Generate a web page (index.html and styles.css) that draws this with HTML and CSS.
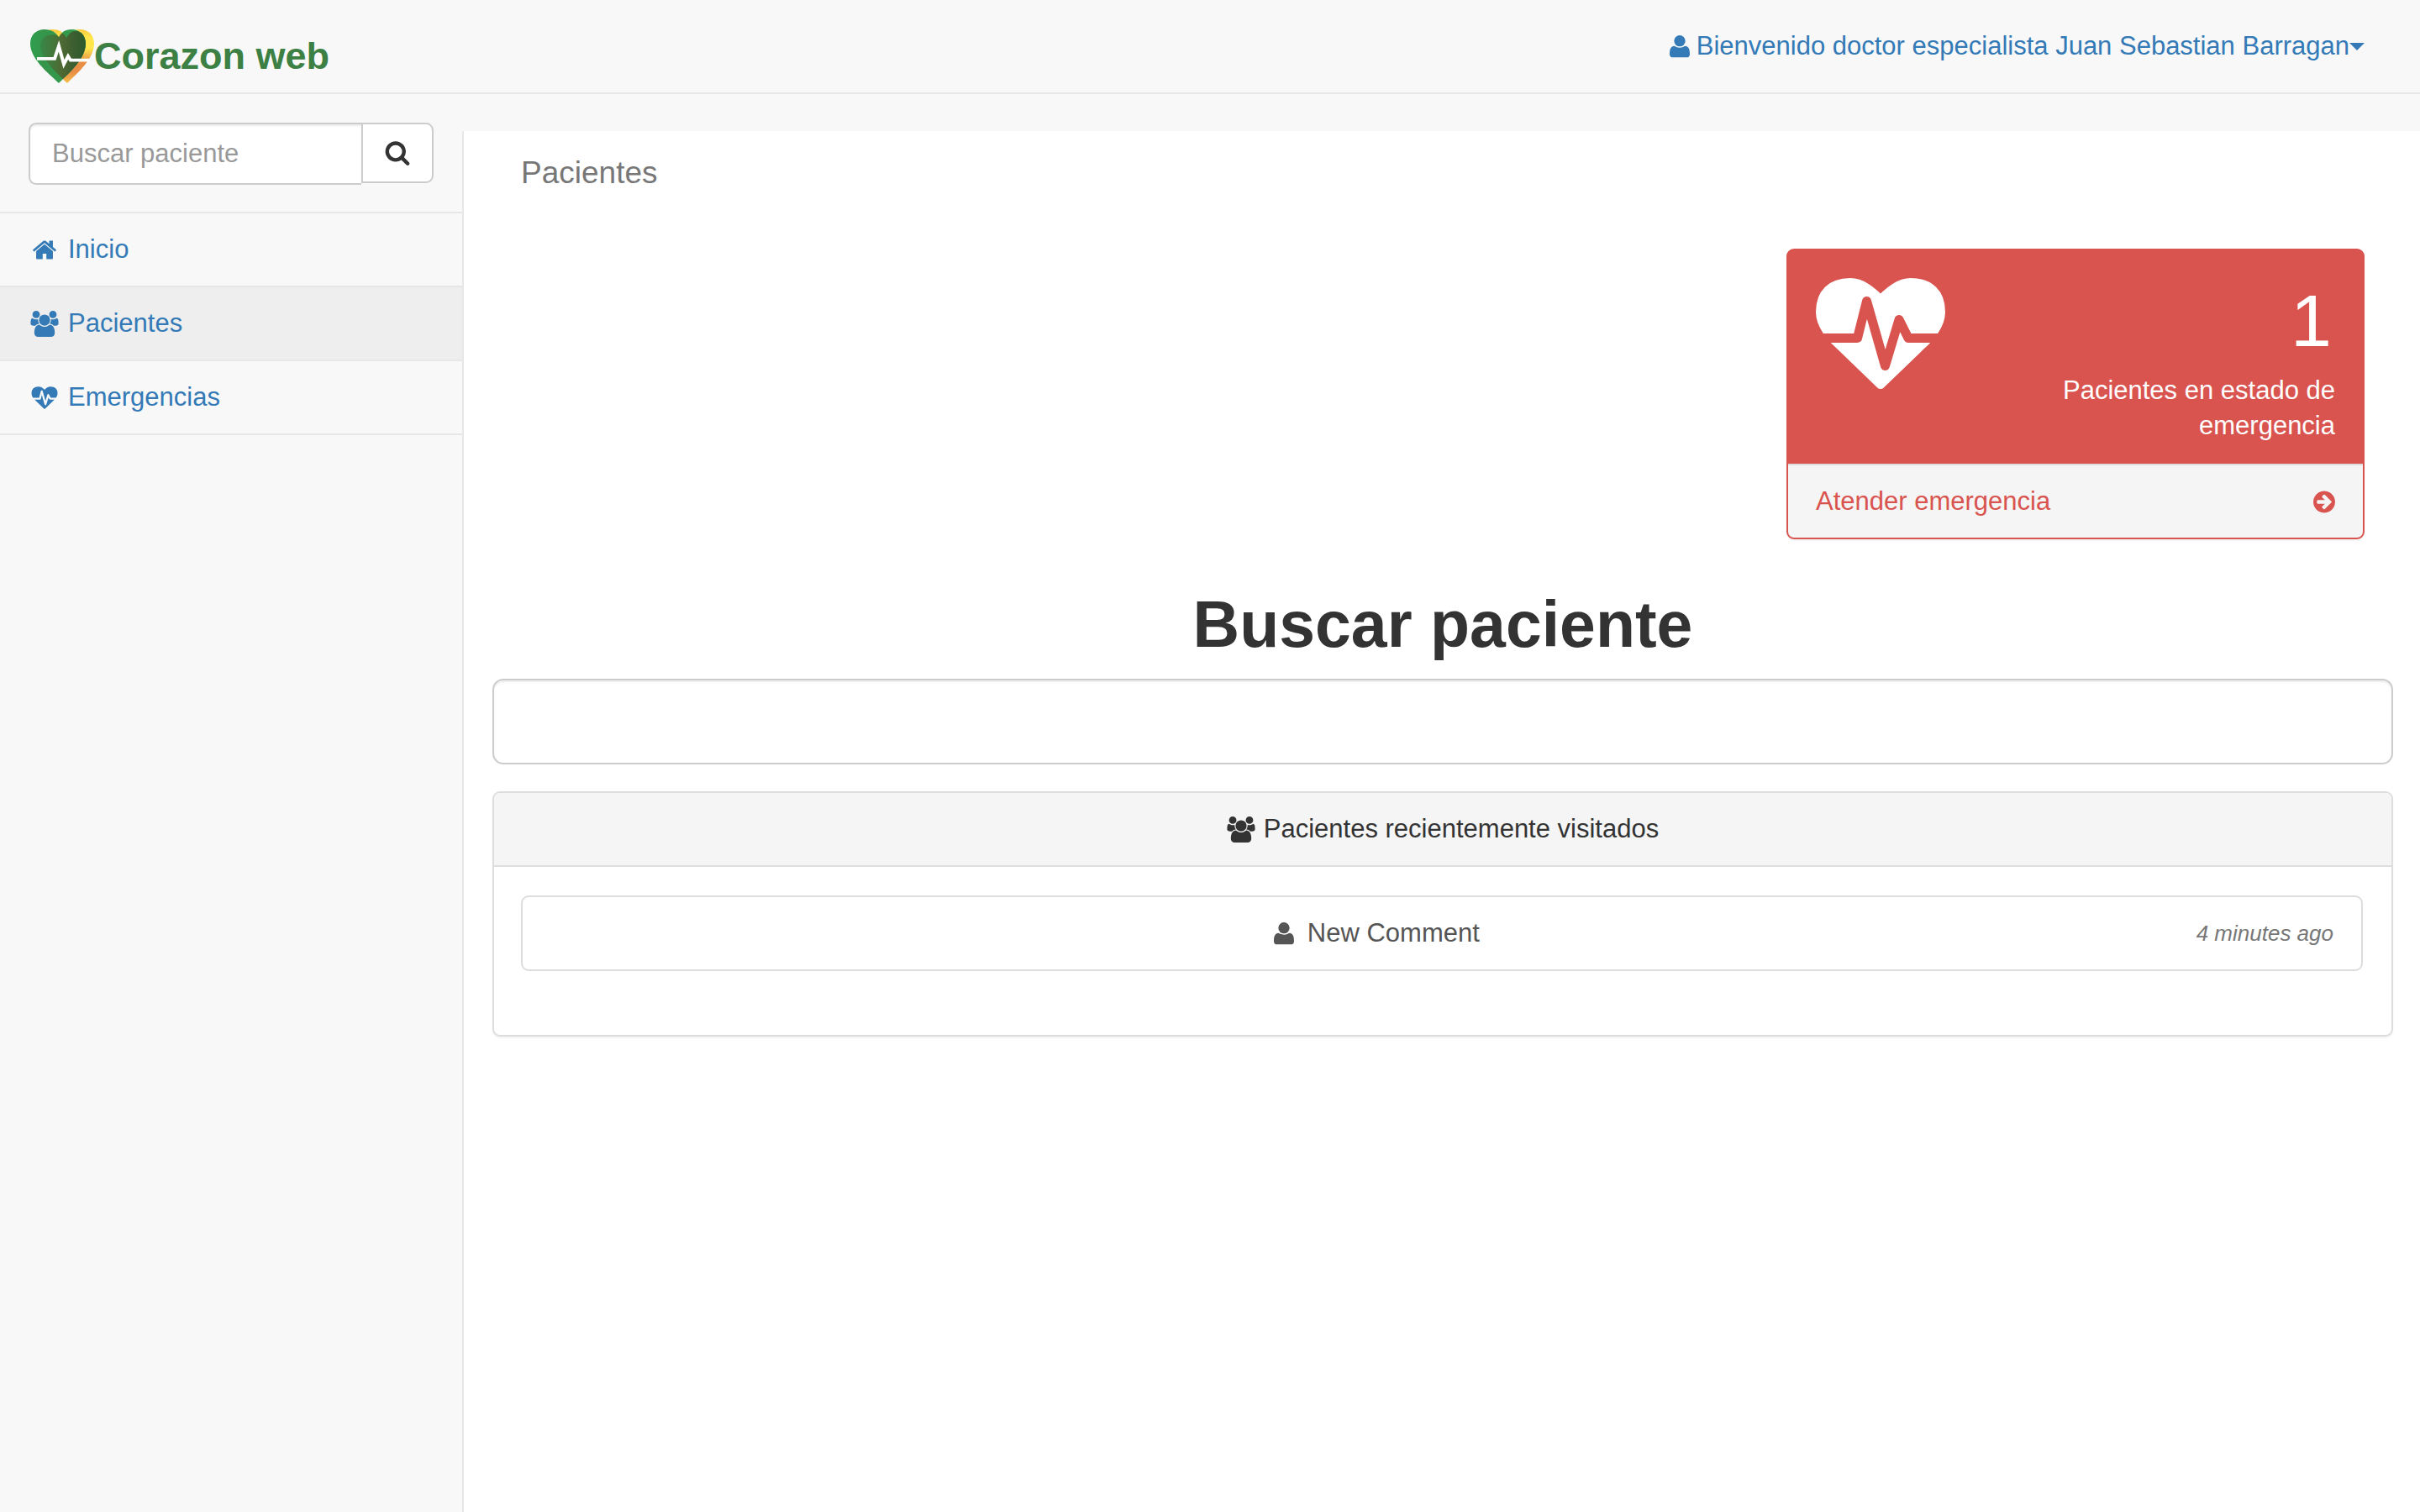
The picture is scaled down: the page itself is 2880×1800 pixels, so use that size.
FILE: index.html
```html
<!DOCTYPE html>
<html lang="es">
<head>
<meta charset="utf-8">
<title>Corazon web</title>
<link rel="stylesheet" href="styles.css">
</head>
<body>
<svg class="sprite" aria-hidden="true">
  <symbol id="i-user" viewBox="35 29 72 93"><circle cx="71" cy="55" r="20"/><path d="M35 103C35 88 37 75 50 73C54 73 60 79 71 79S88 73 92 73C105 75 107 88 107 103C107 110 102 114 96 114H46C40 114 35 110 35 103Z"/></symbol>
  <symbol id="i-home" viewBox="0 0 1792 1792"><path d="M1472 992v480q0 26-19 45t-45 19h-384v-384h-256v384h-384q-26 0-45-19t-19-45v-480q0-1 .5-3t.5-3l575-474 575 474q1 2 1 6zm223-69l-62 74q-8 9-21 11h-3q-13 0-21-7l-692-577-692 577q-12 8-24 7-13-2-21-11l-62-74q-8-10-7-23.5t11-21.5l719-599q32-26 76-26t76 26l244 204v-195q0-14 9-23t23-9h192q14 0 23 9t9 23v408l219 182q10 8 11 21.5t-7 23.5z"/></symbol>
  <symbol id="i-users" viewBox="-64 0 1920 1792"><path d="M529 896q-162 5-265 128h-134q-82 0-138-40.500t-56-118.500q0-353 124-353 6 0 43.500 21t97.500 42.500 119 21.500q67 0 133-23-5 37-5 66 0 139 81 256zm1071 637q0 120-73 189.500t-194 69.500h-874q-121 0-194-69.500t-73-189.500q0-53 3.500-103.500t14-109 26.500-108.500 43-97.500 62-81 85.500-53.500 111.500-20q10 0 43 21.500t73 48 107 48 135 21.500 135-21.500 107-48 73-48 43-21.500q61 0 111.500 20t85.500 53.500 62 81 43 97.500 26.500 108.500 14 109 3.500 103.500zm-1024-1277q0 106-75 181t-181 75-181-75-75-181 75-181 181-75 181 75 75 181zm704 384q0 159-112.500 271.500t-271.500 112.500-271.500-112.500-112.500-271.500 112.500-271.500 271.500-112.500 271.500 112.500 112.500 271.500zm576 225q0 78-56 118.500t-138 40.500h-134q-103-123-265-128 81-117 81-256 0-29-5-66 66 23 133 23 59 0 119-21.500t97.500-42.500 43.500-21q124 0 124 353zm-128-609q0 106-75 181t-181 75-181-75-75-181 75-181 181-75 181 75 75 181z"/></symbol>
  <symbol id="i-heartbeat" viewBox="0 0 1792 1792"><path d="M1280 1024h305q-5 6-10 10.500t-9 7.500l-3 4-623 600q-18 18-44 18t-44-18l-624-602q-5-2-21-20h369q22 0 39.500-13.500t22.500-34.500l70-281 190 667q6 20 23 33t39 13q21 0 38-13t23-33l146-485 56 112q18 35 57 35zm512-428q0 145-103 300h-369l-111-221q-8-17-25.500-27t-36.500-8q-45 5-56 46l-129 430-196-686q-6-20-23.500-33t-39.500-13-39 13.500-22 34.500l-116 464h-423q-103-155-103-300 0-220 127-344t351-124q62 0 126.500 21.500t120 58 95.500 68.500 76 68q36-36 76-68t95.500-68.500 120-58 126.500-21.500q224 0 351 124t127 344z"/></symbol>
  <symbol id="i-search" viewBox="0 0 1792 1792"><path d="M1216 832q0-185-131.500-316.500t-316.500-131.500-316.500 131.500-131.500 316.500 131.500 316.500 316.500 131.500 316.500-131.500 131.500-316.500zm512 832q0 52-38 90t-90 38q-54 0-90-38l-343-342q-179 124-399 124-143 0-273.500-55.500t-225-150-150-225-55.500-273.500 55.500-273.500 150-225 225-150 273.500-55.500 273.500 55.500 225 150 150 225 55.500 273.500q0 220-124 399l343 343q37 37 37 90z"/></symbol>
  <symbol id="i-arrow" viewBox="128 0 1536 1792"><path d="M1413 896q0-27-18-45l-91-91-362-362q-18-18-45-18t-45 18l-91 91q-18 18-18 45t18 45l189 189h-502q-26 0-45 19t-19 45v128q0 26 19 45t45 19h502l-189 189q-18 18-18 45t18 45l91 91q18 18 45 18t45-18l362-362 91-91q18-18 18-45zm251 0q0 209-103 385.500t-279.500 279.500-385.500 103-385.500-103-279.500-279.500-103-385.500 103-385.500 279.500-279.500 385.500-103 385.500 103 279.500 279.500 103 385.500z"/></symbol>
</svg>

<header class="topbar">
  <a class="brand" href="#">
    <svg class="brand-logo" viewBox="0 0 76 68" preserveAspectRatio="none" aria-hidden="true">
      <defs>
        <linearGradient id="g-yellow" x1="0" y1="0" x2="0" y2="1">
          <stop offset="0" stop-color="#fbc93f"/><stop offset=".15" stop-color="#ffe64c"/><stop offset=".35" stop-color="#ffe64c"/><stop offset=".6" stop-color="#e88f45"/><stop offset=".8" stop-color="#e88f45"/><stop offset="1" stop-color="#f7c04a"/>
        </linearGradient>
        <linearGradient id="g-green" x1="0" y1="0" x2="1" y2="0">
          <stop offset="0" stop-color="#2f9e4f"/><stop offset=".25" stop-color="#35954a"/><stop offset="1" stop-color="#2f9e4f"/>
        </linearGradient>
        <linearGradient id="g-dark" x1="0" y1="0" x2="1" y2="0">
          <stop offset="0" stop-color="#37884a"/><stop offset=".2" stop-color="#417a3c"/><stop offset=".4" stop-color="#4f6834"/><stop offset=".65" stop-color="#3a5d30"/><stop offset=".85" stop-color="#2b5a2e"/>
        </linearGradient>
        <clipPath id="c-green"><path d="M34 68C27 60 0 39 0 18C0 7 7 0 17 0C25 0 31 4 34 10C37 4 41 0 49 0C59 0 66 7 66 18C66 39 41 60 34 68Z"/></clipPath>
      </defs>
      <path fill="url(#g-yellow)" d="M44 68C37 60 10 39 10 18C10 7 17 0 27 0C35 0 40 4 43 10C46 4 51 0 59 0C69 0 76 7 76 18C76 39 51 60 44 68Z"/>
      <path fill="url(#g-green)" d="M34 68C27 60 0 39 0 18C0 7 7 0 17 0C25 0 31 4 34 10C37 4 41 0 49 0C59 0 66 7 66 18C66 39 41 60 34 68Z"/>
      <path clip-path="url(#c-green)" fill="url(#g-dark)" d="M44 68C37 60 12 39 12 20C12 10 22 4 33 8C37 4 40 4 43 11C46 4 52 0 58 3C66 8 76 7 76 18C76 39 51 60 44 68Z"/>
      <path fill="none" stroke="#fff" stroke-width="4" d="M8 37H29L34 21L40 44L45 34L48 39H70"/>
    </svg>
    <span>Corazon web</span>
  </a>
  <a class="account" href="#">
    <svg class="icon icon-user" aria-hidden="true"><use href="#i-user"/></svg>
    <span>Bienvenido doctor especialista Juan Sebastian Barragan</span><i class="caret"></i>
  </a>
</header>

<div class="layout">
  <aside class="sidebar">
    <form class="side-search" role="search">
      <input type="text" placeholder="Buscar paciente" aria-label="Buscar paciente">
      <button type="button" aria-label="Buscar"><svg class="icon" aria-hidden="true"><use href="#i-search"/></svg></button>
    </form>
    <nav class="menu">
      <a href="#"><svg class="icon" aria-hidden="true"><use href="#i-home"/></svg>Inicio</a>
      <a href="#" class="active"><svg class="icon" aria-hidden="true"><use href="#i-users"/></svg>Pacientes</a>
      <a href="#"><svg class="icon" aria-hidden="true"><use href="#i-heartbeat"/></svg>Emergencias</a>
    </nav>
  </aside>

  <main class="content">
    <h2 class="page-title">Pacientes</h2>
    <div class="alerts">
      <div class="alert-col">
        <section class="alert-card">
          <div class="alert-body">
            <svg class="alert-icon" aria-hidden="true"><use href="#i-heartbeat"/></svg>
            <div class="alert-text">
              <div class="alert-count">1</div>
              <div>Pacientes en estado de emergencia</div>
            </div>
          </div>
          <a class="alert-footer" href="#">
            <span>Atender emergencia</span>
            <svg class="icon icon-arrow" aria-hidden="true"><use href="#i-arrow"/></svg>
          </a>
        </section>
      </div>
    </div>

    <h1 class="search-title"><label for="patient">Buscar paciente</label></h1>
    <input class="search-input" id="patient" type="text">

    <section class="panel">
      <div class="panel-heading">
        <svg class="icon icon-users" aria-hidden="true"><use href="#i-users"/></svg>
        <span>Pacientes recientemente visitados</span>
      </div>
      <div class="panel-body">
        <a class="list-item" href="#">
          <span class="list-name"><svg class="icon" aria-hidden="true"><use href="#i-user"/></svg>New Comment</span>
          <em>4 minutes ago</em>
        </a>
      </div>
    </section>
  </main>
</div>
</body>
</html>
```
FILE: styles.css
```css
* {
  box-sizing: border-box;
}

body {
  margin: 0;
  min-height: 100vh;
  display: flex;
  flex-direction: column;
  background: #f8f8f8;
  color: #333;
  font-family: "Liberation Sans", Helvetica, Arial, sans-serif;
  font-size: 31px;
  line-height: 44px;
}

a {
  color: #337ab7;
  text-decoration: none;
}

.sprite {
  display: none;
}

.icon {
  flex: none;
  width: 40px;
  height: 31px;
  fill: currentColor;
}

.icon-user {
  width: 24px;
}

.icon-users {
  width: 34px;
}

.icon-arrow {
  width: 26px;
}

/* Top bar */

.topbar {
  display: flex;
  justify-content: space-between;
  height: 112px;
  padding: 0 66px 0 36px;
  border-bottom: 2px solid #e7e7e7;
}

.brand {
  display: flex;
  align-items: center;
  padding-top: 24px;
  color: #3c8043;
  font-size: 45px;
  font-weight: bold;
}

.brand-logo {
  width: 76px;
  height: 64px;
}

.account {
  display: flex;
  align-items: center;
  align-self: flex-start;
  padding-top: 33px;
}

.account .icon {
  margin-right: 8px;
}

.caret {
  border: 9px solid transparent;
  border-top-color: currentColor;
  border-bottom: 0;
}

/* Columns */

.layout {
  flex: 1;
  display: flex;
}

.sidebar {
  flex: none;
  width: 550px;
}

.side-search {
  display: flex;
  align-items: flex-start;
  padding: 34px 34px 32px;
}

.side-search input {
  flex: 1;
  min-width: 0;
  height: 74px;
  padding: 0 26px;
  border: 2px solid #ccc;
  border-right: 0;
  border-radius: 9px 0 0 9px;
  background: #fff;
  box-shadow: inset 0 2px 2px rgba(0, 0, 0, .075);
  color: #555;
  font: inherit;
}

.side-search input::placeholder {
  color: #999;
  opacity: 1;
}

.side-search button {
  display: flex;
  align-items: center;
  justify-content: center;
  width: 86px;
  height: 72px;
  padding: 0 0 2px;
  border: 2px solid #ccc;
  border-radius: 0 9px 9px 0;
  background: #fff;
  color: #333;
}

.menu {
  border-top: 2px solid #e7e7e7;
}

.menu a {
  display: flex;
  align-items: center;
  gap: 8px;
  height: 88px;
  padding: 0 33px;
  border-bottom: 2px solid #e7e7e7;
}

.menu .active {
  background: #eee;
}

/* Main content */

.content {
  flex: 1;
  min-width: 0;
  margin-top: 44px;
  padding: 28px 32px 32px 34px;
  border-left: 2px solid #e7e7e7;
  background: #fff;
}

.page-title {
  margin: 0;
  padding: 0 34px;
  color: #777;
  font-size: 37px;
  font-weight: normal;
  line-height: 44px;
}

.alerts {
  display: flex;
  justify-content: flex-end;
  padding-top: 68px;
}

.alert-col {
  width: calc(100% / 3);
  padding: 0 34px 0 32px;
}

.alert-card {
  overflow: hidden;
  border: 2px solid #d9534f;
  border-radius: 9px;
  background: #d9534f;
  box-shadow: 0 2px 2px rgba(0, 0, 0, .05);
}

.alert-body {
  display: flex;
  justify-content: space-between;
  padding: 22px 33px 24px;
  color: #fff;
  line-height: 42px;
}

.alert-icon {
  flex: none;
  width: 154px;
  height: 154px;
  fill: currentColor;
}

.alert-text {
  width: 390px;
  padding-top: 20px;
  text-align: right;
}

.alert-count {
  padding: 0 4px 20px 0;
  font-size: 88px;
  line-height: 84px;
}

.alert-footer {
  display: flex;
  align-items: center;
  justify-content: space-between;
  height: 88px;
  padding: 0 33px;
  border-top: 2px solid #ddd;
  background: #f5f5f5;
  color: #d9534f;
}

.search-title {
  margin: 0;
  padding: 58px 0 22px;
  font-size: 77px;
  line-height: 86px;
  text-align: center;
}

.search-input {
  display: block;
  width: 100%;
  height: 102px;
  padding: 0 32px;
  border: 2px solid #ccc;
  border-radius: 13px;
  background: #fff;
  box-shadow: inset 0 2px 2px rgba(0, 0, 0, .075);
  color: #555;
  font: inherit;
}

.panel {
  margin-top: 32px;
  border: 2px solid #ddd;
  border-radius: 9px;
  box-shadow: 0 2px 2px rgba(0, 0, 0, .05);
}

.panel-heading {
  display: flex;
  align-items: center;
  justify-content: center;
  gap: 10px;
  height: 88px;
  border-bottom: 2px solid #ddd;
  border-radius: 7px 7px 0 0;
  background: #f5f5f5;
}

.panel-body {
  padding: 34px 34px 76px 32px;
}

.list-item {
  display: flex;
  align-items: center;
  height: 90px;
  padding: 0 33px;
  border: 2px solid #ddd;
  border-radius: 9px;
  color: #555;
}

.list-name {
  flex: 1;
  display: flex;
  align-items: center;
  justify-content: center;
  gap: 8px;
}

.list-item em {
  color: #777;
  font-size: 26px;
}
```
